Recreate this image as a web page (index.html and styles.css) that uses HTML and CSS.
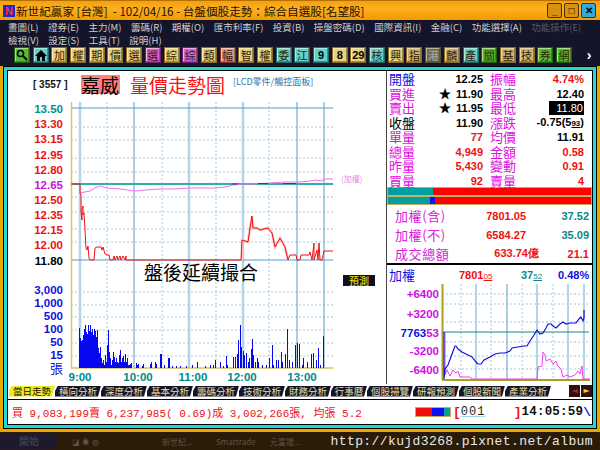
FILE: index.html
```html
<!DOCTYPE html>
<html lang="zh-Hant">
<head>
    <meta charset="UTF-8">
    <title>新世紀贏家</title>
    <link rel="stylesheet" href="styles.css">
</head>
<body>
    <div class="titlebar">
        <span class="logo">N</span>
        <span class="title">新世紀贏家 [台灣] &nbsp;- 102/04/16 - 台盤個股走勢：綜合自選股[名望股]</span>
        <div class="winbtns">
            <span class="winbtn">_</span>
            <span class="winbtn">□</span>
            <span class="winbtn close">✕</span>
        </div>
    </div>

    <div class="menubar">
        <div class="menurow">
            <span>畫圖(L)</span><span>證券(E)</span><span>主力(M)</span><span>籌碼(R)</span><span>期權(O)</span><span>匯市利率(F)</span><span>投資(B)</span><span>操盤密碼(D)</span><span>國際資訊(I)</span><span>金融(C)</span><span>功能選擇(A)</span><span class="off">功能操作(E)</span>
        </div>
        <div class="menurow">
            <span>檢視(V)</span><span>設定(S)</span><span>工具(T)</span><span>說明(H)</span>
        </div>
    </div>

    <div class="toolbar">
        <span class="tool green"><svg width="12" height="12" viewBox="0 0 12 12"><circle cx="4.5" cy="4.5" r="3" fill="none" stroke="#000" stroke-width="1.6"/><path d="M7 7l4 4" stroke="#000" stroke-width="2"/></svg></span>
        <span class="tool cyan"><svg width="12" height="11" viewBox="0 0 12 11"><path d="M6 0L0 6h2v5h3V7h2v4h3V6h2z" fill="#000"/></svg></span>
        <span class="tool">加</span><span class="tool">權</span><span class="tool">期</span><span class="tool">價</span><span class="tool">選</span>
        <span class="tool pink">選</span><span class="tool">綜</span><span class="tool pink">綜</span><span class="tool">類</span><span class="tool rose">幅</span><span class="tool">智</span><span class="tool">權</span>
        <span class="tool cyan">委</span><span class="tool cyan">江</span><span class="tool cyan num">9</span><span class="tool num">8</span><span class="tool num">29</span><span class="tool cyan">核</span><span class="tool">興</span><span class="tool tan">指</span><span class="tool gray">港</span>
        <span class="tool tan">麟</span><span class="tool cyan">產</span><span class="tool green">關</span><span class="tool tan">基</span><span class="tool tan">技</span><span class="tool green">券</span><span class="tool green">網</span>
        <span class="tool-more">›</span>
    </div>

    <div class="shell">
        <div class="frame">
            <div class="frame-mid">
                <div class="frame-core">
                    <div class="main">
                        <div class="left">
                            <div class="chart-head">
                                <span class="code">[ 3557 ]</span>
                                <span class="stock">嘉威</span>
                                <span class="chart-name">量價走勢圖</span>
                                <span class="sector">[LCD零件/觸控面板]</span>
                            </div>
                            <svg class="chart" width="378" height="286" viewBox="8 98 378 286">
                                <g class="grid-dot">
                                    <path d="M71 127H333M71 140H333M71 158H333M71 172H333M71 197H333M71 212H333M71 229H333M71 242H333"/>
                                    <path d="M71 292H333M71 305H333M71 317H333M71 330H333M71 343H333M71 356H333"/>
                                    <path d="M107 102V368M162 102V368M216 102V368M269 102V368"/>
                                </g>
                                <path class="grid-wide" d="M80 102V368M189 102V368M243 102V368"/>
                                <path class="grid-solid" d="M134 102V368M297 102V368M324 102V368M71 108H333M71 260H333"/>
                                <path class="ref-line" d="M71 184H333"/>
                                <path class="axis" d="M71.5 102V368M71 368H333"/>

                                <polyline class="avg" points="80,193 85,192 90,191 95,188 100,186 107,188 120,189 135,191 145,190 160,189 175,189 189,188 200,188 216,188 225,187 233,185 243,184 255,184 270,183 285,182 300,182 310,181 315,180 322,181 324,179 333,179"/>
                                <path class="avg-dash" d="M232 184H238M258 183.5H268M283 183.5H296"/>
                                <polyline class="price-glow" points="242,260 242,240 248,242 250,228 252,216 253,228 257,228 260,230 268,228 272,233 275,247 280,238 285,247 288,260"/>
                                <polyline class="price" points="71,184 80,184 80,193 81,195 81,212 82,220 82,208 83,206 83,215 84,213 85,230 86,248 87,250 88,246 89,258 90,260 94,260 95,248 97,247 101,247 102,250 103,247 105,254 107,255 109,255 110,260 113,260 114,256 115,260 117,256 118,260 120,256 121,260 123,256 125,260 126,256 126,260 241,260 242,240 248,242 250,228 252,216 253,228 257,228 260,230 268,228 272,233 275,247 280,238 285,247 288,260 290,255 296,255 297,260 300,260 301,255 309,255 310,252 312,260 314,243 314,260 317,250 318,260 319,243 320,260 322,260 324,251 333,251"/>

                                <path class="vol" d="M79 368V328M80 368V338M81 368V341M82 368V340M83 368V335M84 368V329M85 368V325M86 368V332M87 368V334M88 368V325M89 368V331M90 368V325M91 368V332M92 368V329M93 368V335M94 368V329M95 368V331M96 368V337M97 368V330M98 368V348M99 368V353M100 368V347M101 368V358M102 368V363M103 368V360M104 368V365M105 368V355M106 368V362M107 368V345M108 368V330M109 368V352M110 368V358M111 368V365M112 368V360M113 368V352M114 368V357M115 368V362M116 368V358M117 368V362M118 368V363M119 368V355M120 368V350M121 368V362M122 368V358M123 368V356M124 368V362M125 368V354M126 368V362M127 368V358M128 368V365M129 368V365M130 368V364M131 368V363M136 368V363M137 368V365M138 368V364M142 368V366M143 368V364M150 368V364M151 368V362M155 368V362M156 368V364M160 368V354M161 368V354M164 368V365M168 368V358M169 368V358M172 368V366M176 368V366M180 368V366M186 368V366M192 368V365M197 368V362M205 368V366M210 368V365M213 368V365M215 368V360M220 368V362M223 368V366M226 368V356M227 368V365M233 368V357M235 368V357M237 368V354M238 368V340M240 368V325M241 368V347M243 368V351M244 368V355M246 368V353M248 368V362M249 368V358M251 368V349M252 368V339M253 368V355M255 368V362M257 368V358M258 368V362M262 368V365M266 368V365M269 368V358M272 368V345M273 368V365M276 368V360M278 368V360M281 368V352M282 368V362M285 368V354M287 368V329M289 368V360M292 368V362M295 368V345M297 368V343M299 368V344M302 368V365M303 368V358M307 368V362M311 368V354M313 368V353M316 368V360M318 368V348M320 368V365M323 368V336"/>

                                <g class="axis-text">
                                    <text class="teal" x="63" y="113">13.50</text>
                                    <text class="red" x="63" y="128">13.30</text>
                                    <text class="red" x="63" y="143">13.15</text>
                                    <text class="red" x="63" y="159">12.95</text>
                                    <text class="red" x="63" y="174">12.80</text>
                                    <text class="pink" x="63" y="189">12.65</text>
                                    <text class="red" x="63" y="204">12.50</text>
                                    <text class="red" x="63" y="219">12.35</text>
                                    <text class="red" x="63" y="234">12.15</text>
                                    <text class="red" x="63" y="249">12.00</text>
                                    <text class="black" x="63" y="265">11.80</text>
                                    <text class="blue" x="63" y="294">3,000</text>
                                    <text class="blue" x="63" y="307">1,000</text>
                                    <text class="blue" x="63" y="320">500</text>
                                    <text class="blue" x="63" y="333">100</text>
                                    <text class="blue" x="63" y="346">50</text>
                                    <text class="blue" x="63" y="359">15</text>
                                    <text class="blue cjk" x="63" y="373">張</text>
                                </g>
                                <g class="time-text">
                                    <text x="80" y="381">9:00</text>
                                    <text x="138" y="381">10:00</text>
                                    <text x="193" y="381">11:00</text>
                                    <text x="242" y="381">12:00</text>
                                    <text x="302" y="381">13:00</text>
                                </g>
                                <text class="ref-name" x="341" y="182">(加權)</text>
                                <text class="after-hours" x="144" y="280">盤後延續撮合</text>
                                <rect x="343" y="275" width="32" height="11" fill="#101020"/>
                                <text class="forecast" x="359" y="284.500">預測</text>
                            </svg>
                        </div>

                        <div class="right">
                            <div class="quote">
                                <span class="lab blue-t">開盤</span><span class="val">12.25</span><span class="lab">振幅</span><span class="val red-t">4.74%</span>
                                <span class="lab">買進</span><span class="val"><i class="star">★</i>11.90</span><span class="lab">最高</span><span class="val">12.40</span>
                                <span class="lab">賣出</span><span class="val"><i class="star">★</i>11.95</span><span class="lab">最低</span><span class="val"><b class="low">11.80</b></span>
                                <span class="lab black-t">收盤</span><span class="val">11.90</span><span class="lab">漲跌</span><span class="val">-0.75(5<small>93</small>)</span>
                                <span class="lab">單量</span><span class="val red-t">77</span><span class="lab">均價</span><span class="val">11.91</span>
                                <span class="lab">總量</span><span class="val red-t">4,949</span><span class="lab">金額</span><span class="val red-t">0.58</span>
                                <span class="lab">昨量</span><span class="val red-t">5,430</span><span class="lab">變動</span><span class="val red-t">0.91</span>
                                <span class="lab">買量</span><span class="val red-t">92</span><span class="lab">賣量</span><span class="val red-t">4</span>
                            </div>
                            <div class="bars">
                                <div class="bar"><span class="seg-teal" style="width:45px"></span><span class="seg-red"></span></div>
                                <div class="bar"><span class="seg-teal" style="width:42px"></span><span class="seg-blue" style="width:5px"></span><span class="seg-red"></span></div>
                            </div>
                            <div class="index-rows">
                                <div class="index-row"><span class="idx-name">加權(含)</span><span class="idx-val">7801.05</span><span class="idx-chg teal-t">37.52</span></div>
                                <div class="index-row"><span class="idx-name">加權(不)</span><span class="idx-val">6584.27</span><span class="idx-chg teal-t">35.09</span></div>
                                <div class="index-row"><span class="idx-name">成交總額</span><span class="idx-val wide">633.74億</span><span class="idx-chg red-t">21.1</span></div>
                            </div>
                            <div class="mini-head">
                                <span class="mini-name">加權</span>
                                <span class="mini-val red-t">7801<small>05</small></span>
                                <span class="mini-val teal-t">37<small>52</small></span>
                                <span class="mini-val blue-t">0.48%</span>
                            </div>
                            <svg class="mini" width="205" height="99" viewBox="387 285 205 99">
                                <path class="grid-dot" d="M442 295H589M442 305H589M442 323H589M442 343H589M442 357H589M442 370H589M461 285V381M491 285V381M522 285V381M553 285V381"/>
                                <path class="grid-wide thin" d="M476 285V381M537 285V381M568 285V381M584 285V381"/>
                                <path class="grid-solid" d="M507 285V381"/>
                                <path class="mini-ref" d="M442 333H589"/>
                                <path class="mini-axis" d="M442.500 285V381M442 381H590"/>
                                <polyline class="mini-pink" points="445,333 445,376 447,371 450,377 453,371 456,374 458,372 460,378 470,378 472,380 537,380 538,368 542,367 543,353 545,356 546,362 550,360 553,365 556,362 558,367 561,370 563,378 567,376 570,378 575,376 578,372 580,375 582,367 583,380 590,380"/>
                                <polyline class="mini-blue" points="444,333 444,380 445,370 448,366 452,355 455,347 456,347 458,350 462,353 468,356 472,358 476,363 478,365 481,365 484,361 490,358 495,355 500,354 505,354 510,352 512,349 518,348 524,347 527,347 530,342 534,336 537,331 540,335 543,334 546,329 548,325 551,325 553,327 556,329 560,325 563,323 566,325 570,324 576,324 579,320 581,318 583,322 584,319 584,311"/>
                                <g class="axis-text">
                                    <text class="pink" x="439" y="299">+6400</text>
                                    <text class="pink" x="439" y="319">+3200</text>
                                    <text class="blue" x="439" y="338">7763<tspan class="pink">53</tspan></text>
                                    <text class="pink" x="439" y="356">-3200</text>
                                    <text class="pink" x="439" y="375">-6400</text>
                                </g>
                            </svg>
                        </div>
                    </div>

                    <div class="tabs">
                        <span class="tab on">當日走勢</span><span class="tab">橫向分析</span><span class="tab">深度分析</span><span class="tab">基本分析</span><span class="tab">籌碼分析</span><span class="tab">技術分析</span><span class="tab">財務分析</span><span class="tab short">行事曆</span><span class="tab">個股掃覽</span><span class="tab">研報預測</span><span class="tab">個股新聞</span><span class="tab">產業分析</span>
                        <div class="tab-nav">
                            <span class="prev">◄</span><span class="next">►</span>
                        </div>
                    </div>

                    <div class="status">
                        <span class="status-text">買 9,083,199賣 6,237,985( 0.69)成 3,002,266張, 均張 5.2</span>
                        <div class="status-right">
                            <span class="meter"><span class="m-red"></span><span class="m-blue"></span><span class="m-teal"></span></span>
                            <span class="bracket">[</span><span class="group-no">001</span><span class="bracket">]</span><span class="clock">14:05:59</span><span class="slash">\</span>
                        </div>
                    </div>
                </div>
            </div>
        </div>
    </div>

    <div class="taskbar">
        <span class="start">開始</span>
        <span class="quick">◪ ◉ ◍</span>
        <span class="task">新世紀...</span>
        <span class="task">Smartrade</span>
        <span class="task">元富證...</span>
        <span class="url">http://kujd3268.pixnet.net/album</span>
    </div>
</body>
</html>
```

FILE: styles.css
```css
html, body {
    margin: 0;
    padding: 0;
}
body {
    width: 600px;
    height: 450px;
    overflow: hidden;
    display: flex;
    flex-direction: column;
    font-family: "Noto Sans CJK TC", "Liberation Sans", sans-serif;
    background: #000;
}

/* title bar */
.titlebar {
    height: 20px;
    display: flex;
    align-items: center;
    padding: 0 4px 0 3px;
    background: linear-gradient(#f2a010, #ffb020 40%, #f09a00);
    border-top: 1px solid #b87000;
    box-sizing: border-box;
}
.logo {
    width: 12px;
    height: 12px;
    margin-right: 1px;
    background: #1c2cc0;
    color: #ff3030;
    font: bold 11px/12px "Liberation Sans", sans-serif;
    text-align: center;
}
.title {
    font-size: 11.600px;
    color: #201000;
    white-space: nowrap;
}
.winbtns {
    margin-left: auto;
    display: flex;
    gap: 2px;
}
.winbtn {
    width: 13px;
    height: 13px;
    border: 1px solid #4a3000;
    border-radius: 2px;
    background: #d89010;
    color: #201000;
    font: bold 10px/13px "Liberation Sans", sans-serif;
    text-align: center;
}
.winbtn.close {
    background: #30a8e0;
    color: #000;
}

/* menu */
.menubar {
    height: 26px;
    background: #14142a;
    padding: 1px 0 0 8px;
    box-sizing: border-box;
}
.menurow {
    display: flex;
    gap: 9.400px;
    height: 12.500px;
    font-size: 9.500px;
    line-height: 12px;
    color: #d0d0d0;
    white-space: nowrap;
}
.menurow .off {
    color: #5a5a68;
}

/* toolbar */
.toolbar {
    height: 20px;
    display: flex;
    align-items: center;
    gap: 2.700px;
    padding: 0 0 2px 14px;
    box-sizing: border-box;
    background: #14142a;
}
.tool {
    width: 16px;
    height: 16px;
    flex: none;
    box-sizing: border-box;
    display: flex;
    align-items: center;
    justify-content: center;
    border: 1px solid #8a6a20;
    box-shadow: inset -1px -1px rgba(90, 60, 0, 0.5), inset 1px 1px rgba(255, 255, 220, 0.5);
    background: #e8d080;
    color: #302000;
    font-size: 11px;
    line-height: 1;
}
.tool.green { background: #50c030; border-color: #206010; }
.tool.cyan { background: #60d0d0; border-color: #206868; }
.tool.pink { background: #d860d8; border-color: #702070; }
.tool.rose { background: #f09090; border-color: #803030; }
.tool.tan { background: #d0b070; }
.tool.gray { background: #706850; border-color: #505040; color: #aaa; }
.tool.num {
    font: bold 11px "Liberation Sans", sans-serif;
    color: #000;
}
.tool-more {
    color: #fff;
    font: bold 14px "Liberation Sans", sans-serif;
    margin-left: 12px;
}

/* window frame */
.shell {
    flex: 1;
    display: flex;
    padding: 0 0 3px;
    background: #e8a800;
    border-left: 3px solid #e8a800;
    border-right: 3px solid #e8a800;
    min-height: 0;
    min-width: 0;
}
.frame {
    flex: 1;
    display: flex;
    border: 1px solid #000;
    min-width: 0;
}
.frame-mid {
    flex: 1;
    display: flex;
    border: 3px solid #20d8d8;
    min-width: 0;
}
.frame-core {
    flex: 1;
    display: flex;
    flex-direction: column;
    border: 1px solid #000;
    background: #fff;
    min-width: 0;
}
.main {
    height: 313px;
    display: flex;
}

/* left chart */
.left {
    width: 378px;
    flex: none;
}
.chart-head {
    height: 27px;
    display: flex;
    align-items: center;
    padding-left: 25px;
    box-sizing: border-box;
    white-space: nowrap;
}
.code {
    width: 48px;
    font: bold 10px "Liberation Sans", sans-serif;
    color: #111;
}
.stock {
    width: 39px;
    height: 19px;
    background: #ff8080;
    color: #000;
    font-size: 19px;
    line-height: 19px;
}
.chart-name {
    margin-left: 10px;
    width: 103px;
    font-size: 19px;
    line-height: 20px;
    color: #ff1010;
}
.sector {
    font-size: 9px;
    color: #2a7ab0;
    margin-top: -6px;
}
.chart, .mini {
    display: block;
}
.grid-dot {
    fill: none;
    stroke: #a4c8e0;
    stroke-dasharray: 2 2;
}
.grid-dot path {
    fill: none;
}
.grid-wide {
    fill: none;
    stroke: #b4d4e8;
    stroke-width: 2.500;
}
.grid-wide.thin {
    stroke-width: 2;
}
.grid-solid {
    fill: none;
    stroke: #5a9ac8;
}
.ref-line {
    fill: none;
    stroke: #30b0a8;
    stroke-width: 2;
}
.axis {
    fill: none;
    stroke: #d0c860;
    stroke-width: 1.500;
}
.avg {
    fill: none;
    stroke: #f070f0;
}
.avg-dash {
    fill: none;
    stroke: #3030d0;
}
.price-glow {
    fill: none;
    stroke: #ffc4c4;
    stroke-width: 2.500;
}
.price {
    fill: none;
    stroke: #f01010;
}
.vol {
    fill: none;
    stroke: #0808f0;
    shape-rendering: crispEdges;
}
.axis-text text {
    font: bold 11.500px "Liberation Sans", sans-serif;
    text-anchor: end;
}
.axis-text .cjk {
    font: 13px "Noto Sans CJK TC", sans-serif;
}
.teal { fill: #009090; }
.red { fill: #f01010; }
.pink { fill: #d010e0; }
.black { fill: #000; }
.blue { fill: #1010e0; }
.time-text text {
    font: bold 11.500px "Liberation Sans", sans-serif;
    fill: #008888;
    text-anchor: middle;
}
.ref-name {
    font-size: 8px;
    fill: #e090e0;
}
.after-hours {
    font-size: 19px;
    fill: #000;
}
.forecast {
    font-size: 10px;
    fill: #f0f000;
    text-anchor: middle;
}

/* right panel */
.right {
    flex: 1;
    min-width: 0;
    border-left: 1px solid #444;
}
.quote {
    height: 116px;
    padding: 1px 0 0 2px;
    box-sizing: border-box;
    display: grid;
    grid-template-columns: 28px 66px 34px 67px;
    grid-auto-rows: 14.500px;
    align-items: center;
}
.lab {
    font-size: 13px;
    line-height: 14px;
    color: #e010e0;
    white-space: nowrap;
}
.lab:nth-child(4n+3) {
    padding-left: 7px;
}
.val {
    font: bold 11px/14px "Liberation Sans", sans-serif;
    color: #000;
    text-align: right;
    white-space: nowrap;
}
.val small {
    font-size: 8px;
    text-decoration: underline;
}
.star {
    font-style: normal;
    font-size: 12px;
    margin-right: 5px;
}
.low {
    display: inline-block;
    width: 35px;
    padding-right: 1px;
    box-sizing: border-box;
    background: #000;
    color: #fff;
    font-weight: normal;
}
.blue-t { color: #1010e0; }
.red-t { color: #f01010; }
.black-t { color: #000; }
.teal-t { color: #088888; }

.bars {
    height: 18px;
    padding: 1px;
    box-sizing: border-box;
    background: #c8b060;
    display: flex;
    flex-direction: column;
    gap: 2px;
}
.bar {
    flex: 1;
    display: flex;
}
.seg-teal { background: #00a0a0; }
.seg-blue { background: #1010f0; }
.seg-red { flex: 1; background: #ff0000; }

.index-rows {
    height: 60px;
    padding-top: 1px;
    box-sizing: border-box;
    border-bottom: 2px solid #000;
}
.index-row {
    height: 19px;
    display: flex;
    align-items: center;
    padding-left: 8px;
    white-space: nowrap;
}
.idx-name {
    width: 95px;
    font-size: 13px;
    letter-spacing: 0.6px;
    color: #d820d8;
    flex: none;
}
.idx-val {
    width: 41px;
    margin-left: -5px;
    text-align: right;
    font: bold 11px "Liberation Sans", sans-serif;
    color: #f01010;
    flex: none;
}
.idx-val.wide {
    width: 54px;
}
.idx-chg {
    margin-left: auto;
    margin-right: 3px;
    font: bold 11px "Liberation Sans", sans-serif;
}
.mini-head {
    height: 19px;
    display: flex;
    align-items: center;
    padding-left: 2px;
    white-space: nowrap;
}
.mini-name {
    width: 70px;
    flex: none;
    font-size: 13px;
    color: #1010e0;
}
.mini-val {
    width: 62px;
    flex: none;
    font: bold 11px "Liberation Sans", sans-serif;
}
.mini-val small {
    font-size: 8px;
    text-decoration: underline;
    font-weight: normal;
}
.mini-val:nth-child(3) {
    width: 37px;
}
.mini-val:nth-child(4) {
    width: 32px;
}
.mini-ref {
    fill: none;
    stroke: #108880;
}
.mini-axis {
    fill: none;
    stroke: #a8a020;
    stroke-width: 2;
}
.mini-pink {
    fill: none;
    stroke: #f040f0;
}
.mini-blue {
    fill: none;
    stroke: #1010e0;
    stroke-width: 1.200;
}

/* tabs */
.tabs {
    height: 16px;
    display: flex;
    align-items: center;
    padding: 0 0 2px 1px;
    box-sizing: border-box;
    border-bottom: 1px solid #000;
}
.tab {
    width: 46px;
    height: 11px;
    margin-top: 1px;
    flex: none;
    background: #14142a;
    color: #e8e0a0;
    font-size: 9.500px;
    line-height: 11px;
    text-align: center;
    clip-path: polygon(3px 0, 100% 0, calc(100% - 3px) 100%, 0 100%, 0 50%);
    white-space: nowrap;
}
.tab.on {
    background: #f0e820;
    color: #201000;
}
.tab.short {
    width: 36px;
}
.tab-nav {
    margin-left: auto;
    display: flex;
    gap: 1px;
    font: 8px/12px "DejaVu Sans", sans-serif;
}
.prev, .next {
    width: 11px;
    height: 12px;
    text-align: center;
    background: #301010;
    color: #b02020;
}
.next {
    color: #f0d020;
}

/* status */
.status {
    flex: 1;
    display: flex;
    align-items: center;
    padding: 0 0 0 4px;
    white-space: pre;
}
.status-text {
    font: 11px "Liberation Mono", "Noto Sans CJK TC", monospace;
    color: #f01010;
}
.status-right {
    margin-left: auto;
    display: flex;
    align-items: center;
    font: bold 11px "Liberation Mono", monospace;
    padding-right: 1px;
}
.meter {
    width: 36px;
    height: 10px;
    display: flex;
    border: 1px solid #c8b060;
    margin-right: 2px;
    box-sizing: border-box;
}
.m-red { flex: 16; background: #f01010; }
.m-blue { flex: 12; background: #1010f0; }
.m-teal { flex: 6; background: #00a0a0; }
.bracket {
    color: #f01010;
    font-size: 13px;
}
.group-no {
    width: 53px;
    color: #222;
    font-weight: normal;
    font-size: 12px;
    letter-spacing: 1px;
    text-decoration: underline #a0d8e8;
}
.clock {
    font-size: 12.500px;
    letter-spacing: 0.200px;
    color: #111;
}
.slash {
    color: #1010e0;
    font-size: 13px;
}

/* taskbar */
.taskbar {
    height: 18px;
    flex: none;
    display: flex;
    align-items: center;
    background: #2a1c08;
    white-space: nowrap;
    color: #5c5648;
    font-size: 8px;
    overflow: hidden;
}
.start {
    width: 58px;
    height: 16px;
    text-align: center;
    font-size: 10px;
    line-height: 16px;
    background: #1c1a2c;
    border-radius: 0 8px 8px 0;
    color: #4a4a60;
}
.quick {
    margin-left: 14px;
    width: 90px;
}
.task {
    width: 54px;
}
.url {
    margin-left: auto;
    margin-right: 7px;
    font: 13px "Liberation Mono", monospace;
    letter-spacing: 0.400px;
    color: #e8e8e8;
}
```
